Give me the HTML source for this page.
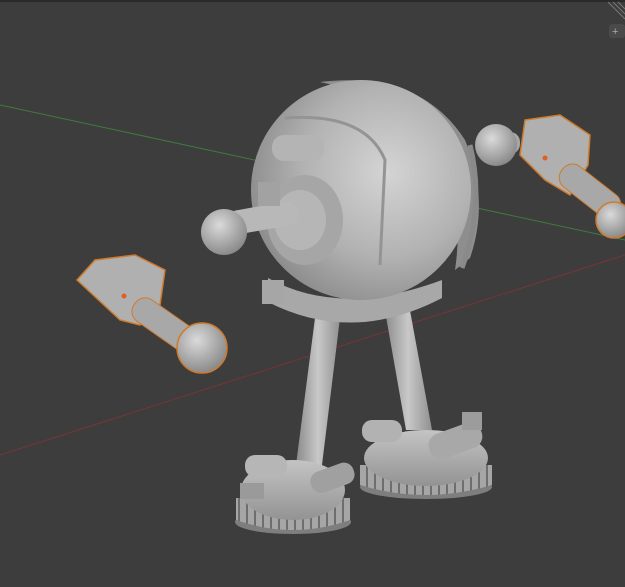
<!DOCTYPE html>
<html><head><meta charset="utf-8"><style>
html,body{margin:0;padding:0;background:#3d3d3d;width:625px;height:587px;overflow:hidden}
</style></head><body>
<svg width="625" height="587" viewBox="0 0 625 587" xmlns="http://www.w3.org/2000/svg">
<defs>
<radialGradient id="sph" cx="0.62" cy="0.42" r="0.7">
<stop offset="0" stop-color="#d4d4d4"/><stop offset="0.55" stop-color="#b2b2b2"/><stop offset="1" stop-color="#858585"/></radialGradient>
<radialGradient id="ball" cx="0.4" cy="0.35" r="0.7">
<stop offset="0" stop-color="#dadada"/><stop offset="1" stop-color="#858585"/></radialGradient>
<linearGradient id="leg" x1="0" x2="1"><stop offset="0" stop-color="#8a8a8a"/><stop offset="0.5" stop-color="#c8c8c8"/><stop offset="1" stop-color="#909090"/></linearGradient>
<linearGradient id="foot" x1="0" y1="0" x2="0" y2="1"><stop offset="0" stop-color="#c4c4c4"/><stop offset="1" stop-color="#939393"/></linearGradient>
<pattern id="teeth" width="8" height="20" patternUnits="userSpaceOnUse"><rect width="8" height="20" fill="#a6a6a6"/><rect x="6" width="2" height="20" fill="#6e6e6e"/></pattern>
</defs>
<rect width="625" height="587" fill="#3d3d3d"/>
<rect width="625" height="2" fill="#2a2a2a"/>
<path d="M608 2 L625 19 M613 2 L625 14 M618 2 L625 9" stroke="#777" stroke-width="1"/>
<rect x="609" y="24" width="16" height="14" rx="3" fill="#4a4a4a"/>
<text x="612" y="35" fill="#aaa" font-family="Liberation Sans,sans-serif" font-size="11">+</text>
<line x1="0" y1="105" x2="625" y2="240" stroke="#3f7a3f" stroke-width="1"/>
<line x1="0" y1="455" x2="625" y2="255" stroke="#7a3434" stroke-width="1"/>
<!-- legs -->
<path d="M315 318 L340 318 L322 465 L296 465 Z" fill="url(#leg)"/>
<path d="M384 305 L409 305 L432 430 L406 430 Z" fill="url(#leg)"/>
<!-- right foot -->
<path d="M360 465 L360 485 Q425 505 492 485 L492 465 Z" fill="url(#teeth)"/>
<ellipse cx="426" cy="487" rx="66" ry="12" fill="#7e7e7e"/>
<path d="M360 465 L360 485 Q425 505 492 485 L492 465 Z" fill="url(#teeth)"/>
<ellipse cx="426" cy="458" rx="62" ry="28" fill="url(#foot)"/>
<rect x="428" y="428" width="55" height="26" rx="12" fill="#a8a8a8" transform="rotate(-20 455 441)"/>
<rect x="462" y="412" width="20" height="18" fill="#9c9c9c"/>
<rect x="362" y="420" width="40" height="22" rx="10" fill="#b2b2b2"/>
<!-- left foot -->
<ellipse cx="293" cy="522" rx="58" ry="12" fill="#7e7e7e"/>
<path d="M236 498 L236 520 Q293 540 350 520 L350 498 Z" fill="url(#teeth)"/>
<ellipse cx="293" cy="490" rx="52" ry="30" fill="url(#foot)"/>
<rect x="245" y="455" width="42" height="22" rx="10" fill="#b6b6b6"/>
<rect x="310" y="467" width="45" height="22" rx="10" fill="#a0a0a0" transform="rotate(-20 332 478)"/>
<rect x="240" y="483" width="24" height="16" fill="#9a9a9a"/>
<!-- collar -->
<path d="M268 278 Q340 318 442 280 L442 298 Q352 345 268 302 Z" fill="#a8a8a8"/>
<!-- sphere -->
<path d="M320 82 Q420 70 465 140 Q490 200 470 258 L455 270 Q470 170 400 100 Z" fill="#8e8e8e"/>
<circle cx="361" cy="190" r="110" fill="url(#sph)"/>
<path d="M470 145 Q485 205 462 268" stroke="#8a8a8a" stroke-width="5" fill="none"/>
<path d="M285 118 Q365 112 385 160 L380 265" stroke="#949494" stroke-width="3" fill="none"/>
<rect x="272" y="135" width="52" height="26" rx="12" fill="#b4b4b4"/>
<ellipse cx="305" cy="220" rx="38" ry="45" fill="#a6a6a6"/>
<ellipse cx="300" cy="220" rx="26" ry="30" fill="#b6b6b6"/>
<!-- left shoulder -->
<rect x="228" y="206" width="70" height="24" rx="10" fill="#b8b8b8" transform="rotate(-10 262 218)"/>
<circle cx="224" cy="232" r="23" fill="url(#ball)"/>
<rect x="258" y="182" width="22" height="24" fill="#a2a2a2"/>
<rect x="262" y="280" width="22" height="24" fill="#a6a6a6"/>
<!-- right arm -->
<rect x="480" y="132" width="40" height="22" rx="10" fill="#a6a6a6"/>
<circle cx="496" cy="145" r="21" fill="url(#ball)"/>
<path d="M525 120 L560 115 L590 135 L588 165 L570 195 L545 180 L520 155 Z" fill="#b0b0b0" stroke="#d07a2a" stroke-width="1.5"/>
<rect x="555" y="178" width="70" height="26" rx="12" fill="#a8a8a8" stroke="#d07a2a" stroke-width="1" transform="rotate(38 590 191)"/>
<circle cx="614" cy="220" r="18" fill="url(#ball)" stroke="#d07a2a" stroke-width="1.5"/>
<circle cx="545" cy="158" r="2.5" fill="#e06020"/>
<!-- left arm -->
<path d="M77 280 L95 260 L135 255 L165 270 L160 305 L140 325 L120 320 Z" fill="#b0b0b0" stroke="#d07a2a" stroke-width="1.5"/>
<rect x="128" y="312" width="75" height="26" rx="12" fill="#a8a8a8" stroke="#d07a2a" stroke-width="1" transform="rotate(35 165 325)"/>
<circle cx="202" cy="348" r="25" fill="url(#ball)" stroke="#d07a2a" stroke-width="1.5"/>
<circle cx="124" cy="296" r="2.5" fill="#e06020"/>
</svg>
</body></html>
